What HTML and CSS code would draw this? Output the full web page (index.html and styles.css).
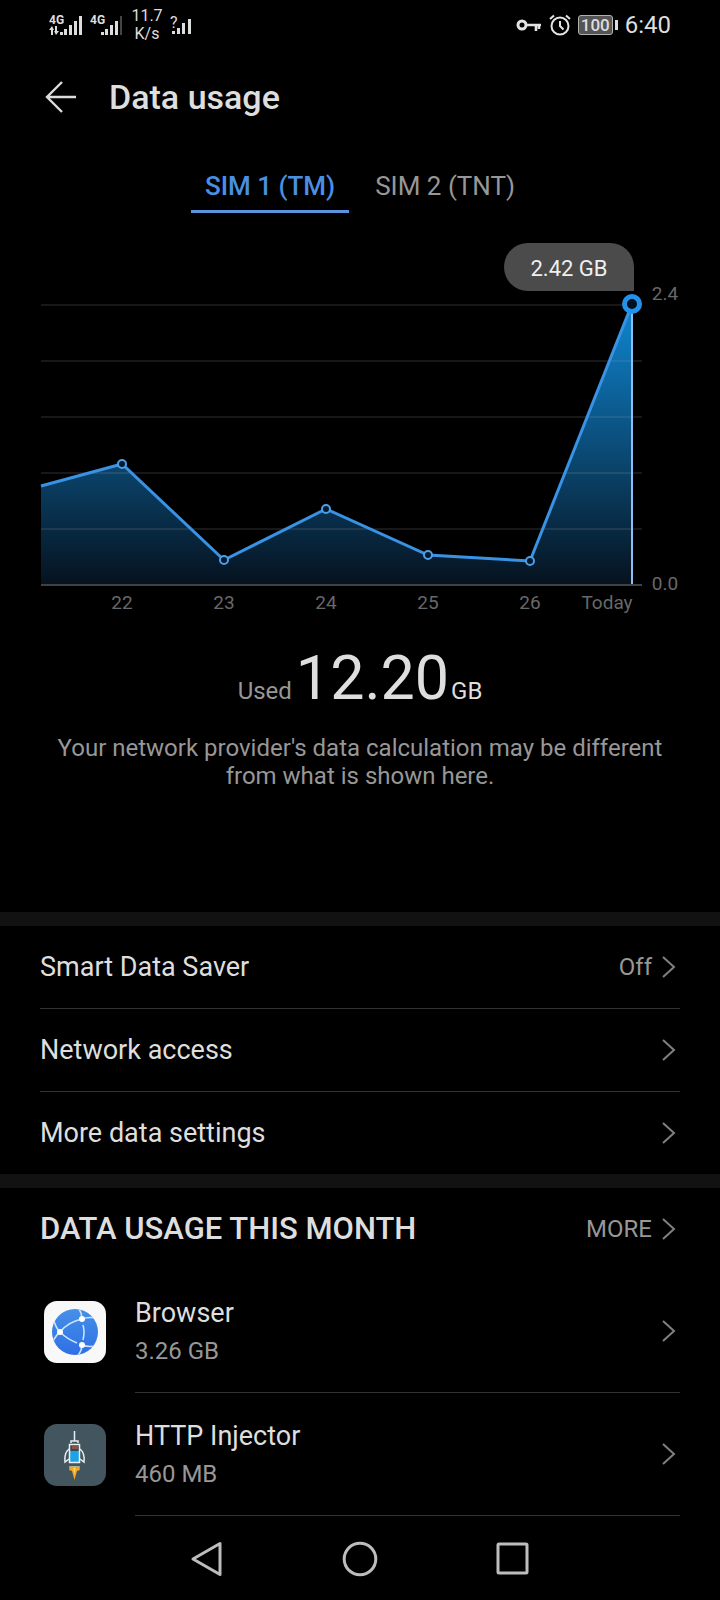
FILE: index.html
```html
<!DOCTYPE html>
<html lang="en">
<head>
    <meta charset="UTF-8">
    <meta name="viewport" content="width=device-width, initial-scale=1.0">
    <title>Data usage</title>
    <link rel="stylesheet" href="styles.css">
</head>
<body>
    <!-- Status bar -->
    <div class="status-bar">
        <div class="status-left">
            <svg class="signal" width="34" height="24" viewBox="0 1 34 24" fill="#ddd">
                <text x="0" y="12" class="signal-text">4G</text>
                <path d="M0 18l3-4 2 4h-1v5h-2v-5zM6 14h2v5h2l-3 4-2-4h1z"/>
                <path d="M11 20h3v3h-3zM15 17h3v6h-3zM20 13h3v10h-3zM25 9h3v14h-3zM30 4h3v19h-3z"/>
            </svg>
            <svg class="signal" width="34" height="24" viewBox="0 1 34 24" fill="#ddd">
                <text x="0" y="12" class="signal-text">4G</text>
                <path d="M11 20h3v3h-3zM15 17h3v6h-3zM20 13h3v10h-3zM25 9h3v14h-3z"/>
                <path d="M30 4h2v19h-2z" fill="#444"/>
            </svg>
            <div class="speed"><span>11.7</span><span>K/s</span></div>
            <svg class="signal" width="22" height="24" viewBox="0 1 22 24" fill="#ddd">
                <text x="0" y="16" class="signal-unknown">?</text>
                <path d="M2 19h3v3h-3zM7 16h3v6h-3zM12 11h3v11h-3zM18 7h3v15h-3z"/>
            </svg>
        </div>
        <div class="status-right">
            <svg width="26" height="14" viewBox="0 0 26 14" fill="none" stroke="#e4e4e4" stroke-width="3">
                <circle cx="6" cy="7" r="4"/>
                <path d="M10 7h15M23 7v4M20 7v6" stroke-width="2.6"/>
            </svg>
            <svg width="22" height="22" viewBox="0 0 22 22" fill="none" stroke="#e4e4e4" stroke-width="2">
                <circle cx="11" cy="12" r="8.5"/>
                <path d="M11 7v5l3.500 3.500M1 5l4-3.500M21 5l-4-3.500"/>
            </svg>
            <div class="battery"><span class="battery-level">100</span><span class="battery-tip"></span></div>
            <span class="clock">6:40</span>
        </div>
    </div>

    <header class="header">
        <button class="back" aria-label="Back">
            <svg width="32" height="32" viewBox="0 0 32 32" fill="none" stroke="#dcdcdc" stroke-width="2.400">
                <path d="M31 16H2M17 1L2 16l15 15"/>
            </svg>
        </button>
        <h1>Data usage</h1>
    </header>

    <div class="tabs" role="tablist">
        <button class="tab active" role="tab" aria-selected="true">SIM 1 (TM)</button>
        <button class="tab" role="tab" aria-selected="false">SIM 2 (TNT)</button>
    </div>

    <!-- Daily usage chart -->
    <svg class="chart" viewBox="0 0 720 390" role="img" aria-label="Daily data usage">
        <defs>
            <linearGradient id="area" gradientUnits="userSpaceOnUse" x1="0" y1="74" x2="0" y2="355">
                <stop offset="0" stop-color="#0f87d2"/>
                <stop offset="0.5" stop-color="#0b4d7a"/>
                <stop offset="1" stop-color="#06121e"/>
            </linearGradient>
        </defs>
        <path d="M41 256L122 234L224 330L326 279L428 325L530 331L632 74V355H41z" fill="url(#area)"/>
        <path class="grid" d="M41 75H642M41 131H642M41 187H642M41 243H642M41 299H642"/>
        <path class="axis" d="M41 355H642"/>
        <path class="marker-line" d="M632 74V354"/>
        <path class="line" d="M41 256L122 234L224 330L326 279L428 325L530 331L632 74"/>
        <g class="dots">
            <circle cx="122" cy="234" r="4"/>
            <circle cx="224" cy="330" r="4"/>
            <circle cx="326" cy="279" r="4"/>
            <circle cx="428" cy="325" r="4"/>
            <circle cx="530" cy="331" r="4"/>
        </g>
        <circle class="today-dot" cx="632" cy="74" r="7.5"/>
        <path class="tip" d="M528 13H610A24 24 0 0 1 634 37V61H528A24 24 0 0 1 528 13z"/>
        <text class="tip-text" x="569" y="46">2.42 GB</text>
        <g class="labels">
            <text x="122" y="379">22</text>
            <text x="224" y="379">23</text>
            <text x="326" y="379">24</text>
            <text x="428" y="379">25</text>
            <text x="530" y="379">26</text>
            <text x="607" y="379">Today</text>
            <text x="665" y="70">2.4</text>
            <text x="665" y="360">0.0</text>
        </g>
    </svg>

    <div class="summary">
        <p class="total"><span class="used">Used</span><span class="amount">12.20</span><span class="unit">GB</span></p>
        <p class="note">Your network provider's data calculation may be different from what is shown here.</p>
    </div>

    <!-- Settings -->
    <nav class="section settings">
        <a class="row" href="#">
            <span class="row-title">Smart Data Saver</span>
            <span class="row-value">Off</span>
            <svg class="chevron" viewBox="0 0 14 24"><path d="M1 2l11 10L1 22"/></svg>
        </a>
        <a class="row" href="#">
            <span class="row-title">Network access</span>
            <svg class="chevron" viewBox="0 0 14 24"><path d="M1 2l11 10L1 22"/></svg>
        </a>
        <a class="row" href="#">
            <span class="row-title">More data settings</span>
            <svg class="chevron" viewBox="0 0 14 24"><path d="M1 2l11 10L1 22"/></svg>
        </a>
    </nav>

    <!-- Usage per app -->
    <section class="section">
        <div class="section-head">
            <h2>DATA USAGE THIS MONTH</h2>
            <a class="more" href="#">
                <span class="row-value">MORE</span>
                <svg class="chevron" viewBox="0 0 14 24"><path d="M1 2l11 10L1 22"/></svg>
            </a>
        </div>
        <a class="app" href="#">
            <svg class="app-icon" viewBox="0 0 62 62">
                <defs>
                    <linearGradient id="globe" x1="0" y1="0" x2="0" y2="1">
                        <stop offset="0" stop-color="#4590e8"/>
                        <stop offset="1" stop-color="#2f6fe6"/>
                    </linearGradient>
                    <clipPath id="disc"><circle cx="31" cy="31" r="23"/></clipPath>
                </defs>
                <rect width="62" height="62" rx="13" fill="#f8f8f8"/>
                <circle cx="31" cy="31" r="23" fill="url(#globe)"/>
                <g clip-path="url(#disc)" fill="none" stroke="#c9e4fb" stroke-width="1.600">
                    <path d="M16 31Q24 21 38 18M16 31Q23 38 33 42M39 24Q41 31 39 39"/>
                    <path d="M38 18Q38 12 34 6M38 18Q46 15 55 18M16 31Q12 34 8 42M16 31Q12 27 10 20M38 44Q38 50 33 56M38 44Q46 47 55 44"/>
                </g>
                <g fill="#fff">
                    <circle cx="16" cy="31" r="3"/>
                    <circle cx="38" cy="18" r="3"/>
                    <circle cx="38" cy="44" r="3"/>
                </g>
            </svg>
            <span class="app-body">
                <span class="app-text">
                    <span class="row-title">Browser</span>
                    <span class="row-value">3.26 GB</span>
                </span>
                <svg class="chevron" viewBox="0 0 14 24"><path d="M1 2l11 10L1 22"/></svg>
            </span>
        </a>
        <a class="app" href="#">
            <svg class="app-icon" viewBox="0 0 62 62">
                <rect width="62" height="62" rx="13" fill="#43565f"/>
                <path d="M26 21h9v17h-9z" fill="#37474f"/>
                <path d="M28 22h6v3h-6z" fill="#8a504e"/>
                <path d="M26 27h9v11h-9z" fill="#1ea2e6"/>
                <path d="M26 42h9l1 4-3 1-2.500 9-2.500-9-3-1z" fill="#f5a623"/>
                <path d="M29 42h3l-1.500 9z" fill="#ffd65a"/>
                <g fill="none" stroke="#e8eef0" stroke-width="1.500">
                    <path d="M30.500 7v10M27 19v-2h7v2M25.500 20.500h10v18h-10z"/>
                    <path d="M25 25q-5 4-4 13l4-3M36 25q5 4 4 13l-4-3"/>
                    <path d="M25 43h11" stroke="#9fb0b7"/>
                </g>
            </svg>
            <span class="app-body">
                <span class="app-text">
                    <span class="row-title">HTTP Injector</span>
                    <span class="row-value">460 MB</span>
                </span>
                <svg class="chevron" viewBox="0 0 14 24"><path d="M1 2l11 10L1 22"/></svg>
            </span>
        </a>
    </section>

    <!-- System navigation -->
    <div class="nav-bar">
        <button aria-label="Back">
            <svg width="36" height="36" viewBox="0 0 36 36"><path d="M31 2.500V33.500L4 18z"/></svg>
        </button>
        <button aria-label="Home">
            <svg width="36" height="36" viewBox="0 0 36 36"><circle cx="18" cy="18" r="15.800"/></svg>
        </button>
        <button aria-label="Recent apps">
            <svg width="36" height="36" viewBox="0 0 36 36"><rect x="3" y="3" width="29" height="29" rx="1"/></svg>
        </button>
    </div>
</body>
</html>
```
FILE: styles.css
```css
* {
    box-sizing: border-box;
}
body {
    margin: 0;
    min-height: 100vh;
    display: flex;
    flex-direction: column;
    background-color: #000;
    color: #dedede;
    font-family: Roboto, 'Noto Sans', sans-serif;
}
h1, h2, p {
    margin: 0;
}
svg {
    display: block;
    flex-shrink: 0;
}
button {
    padding: 0;
    border: none;
    background: none;
    color: inherit;
    font: inherit;
    cursor: pointer;
}
a {
    color: inherit;
    text-decoration: none;
}

/* Status bar */
.status-bar {
    display: flex;
    justify-content: space-between;
    align-items: center;
    height: 50px;
    padding: 0 49px;
}
.status-left {
    display: flex;
    align-items: center;
    gap: 7px;
}
.status-right {
    display: flex;
    align-items: center;
    gap: 7px;
}
.signal-text {
    font-size: 12px;
    font-weight: 700;
}
.signal-unknown {
    font-size: 16px;
}
.speed {
    display: flex;
    flex-direction: column;
    align-items: center;
    width: 32px;
    font-size: 16px;
    line-height: 18px;
}
.battery {
    display: flex;
    align-items: center;
    gap: 2px;
}
.battery-level {
    width: 35px;
    height: 20px;
    border: 1px solid #b0b0b0;
    border-radius: 3px;
    background-color: #555;
    font-size: 17px;
    font-weight: 500;
    line-height: 18px;
    text-align: center;
}
.battery-tip {
    width: 3px;
    height: 10px;
    background-color: #ddd;
}
.clock {
    font-size: 24px;
    line-height: 28px;
}

/* Title and tabs */
.header {
    display: flex;
    align-items: center;
    gap: 32px;
    height: 94px;
    padding: 0 45px;
}
h1 {
    font-size: 34px;
    font-weight: 500;
    line-height: 40px;
}
.tabs {
    display: flex;
    justify-content: center;
    gap: 12px;
    height: 86px;
    padding: 18px 0;
}
.tab {
    height: 51px;
    padding: 0 14px;
    border-bottom: 3px solid transparent;
    color: #979797;
    font-size: 26px;
}
.tab.active {
    border-bottom-color: #5b93de;
    color: #4a90e2;
    font-weight: 500;
}

/* Chart */
.chart {
    width: 100%;
}
.grid {
    stroke: #a0a0a0;
    stroke-opacity: 0.15;
    stroke-width: 2;
}
.axis {
    stroke: #3e4246;
    stroke-width: 2;
}
.line {
    fill: none;
    stroke: #3a92e4;
    stroke-width: 3;
}
.marker-line {
    stroke: #8cc0f5;
    stroke-width: 2;
}
.dots circle {
    fill: #04192c;
    stroke: #4d9fe8;
    stroke-width: 2;
}
.today-dot {
    fill: #02101f;
    stroke: #2492ea;
    stroke-width: 5;
}
.tip {
    fill: #4b4b4b;
}
.tip-text {
    fill: #efefef;
    font-size: 22px;
    text-anchor: middle;
}
.labels {
    fill: #686868;
    font-size: 19px;
    text-anchor: middle;
}

/* Total */
.summary {
    padding: 18px 40px 122px;
    text-align: center;
}
.total {
    display: flex;
    justify-content: center;
    align-items: baseline;
    gap: 2px;
    margin-bottom: 3px;
    line-height: 80px;
}
.used {
    margin-right: 2px;
    color: #979797;
    font-size: 24px;
}
.amount {
    font-size: 61px;
}
.unit {
    font-size: 24px;
}
.note {
    color: #979797;
    font-size: 24px;
    line-height: 28px;
}

/* Lists */
.section {
    border-top: 14px solid #121212;
    padding: 0 40px;
}
.row {
    display: flex;
    align-items: center;
    gap: 10px;
    height: 83px;
    border-bottom: 1px solid #333;
}
.row:last-child {
    height: 82px;
    border-bottom: none;
}
.row-title {
    flex: 1;
    font-size: 27px;
    line-height: 32px;
}
.row-value {
    color: #979797;
    font-size: 24px;
    line-height: 30px;
}
.chevron {
    width: 14px;
    height: 24px;
    margin-right: 4px;
    fill: none;
    stroke: #808080;
    stroke-width: 2;
}
.section-head {
    display: flex;
    justify-content: space-between;
    align-items: center;
    height: 82px;
}
h2 {
    font-size: 31px;
    font-weight: 500;
    line-height: 40px;
}
.more {
    display: flex;
    align-items: center;
    gap: 10px;
}
.app {
    display: flex;
    align-items: center;
    gap: 29px;
    padding-left: 4px;
}
.app-icon {
    width: 62px;
    height: 62px;
}
.app-body {
    flex: 1;
    display: flex;
    align-items: center;
    height: 123px;
    border-bottom: 1px solid #333;
}
.app-text {
    flex: 1;
    display: flex;
    flex-direction: column;
    gap: 7px;
}

/* System navigation */
.nav-bar {
    flex: 1;
    display: flex;
    justify-content: center;
    align-items: center;
    gap: 117px;
    min-height: 85px;
}
.nav-bar svg {
    fill: none;
    stroke: #bdbdbd;
    stroke-width: 3px;
    stroke-linejoin: round;
}
```
